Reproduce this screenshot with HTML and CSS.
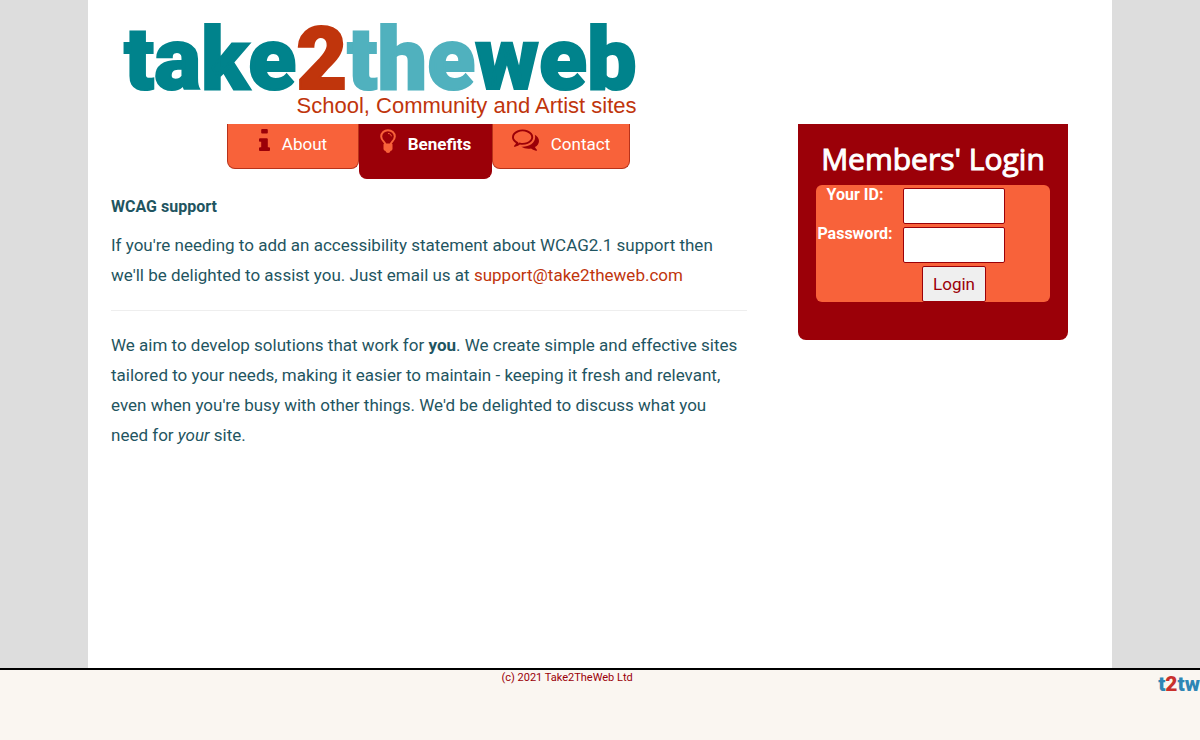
FILE: index.html
```html
<!DOCTYPE html>
<html lang="en">
<head>
  <meta charset="UTF-8">
  <meta name="viewport" content="width=device-width, initial-scale=1.0">
  <title>Take2TheWeb - Benefits</title>
  <link rel="stylesheet" href="styles.css">
</head>
<body>
  <div class="page">
    <header class="banner">
      <a href="#" class="logo">
        <span class="logo-name">take<span class="logo-two">2</span><span class="logo-the">the</span>web</span>
        <span class="logo-tag">School, Community and Artist sites</span>
      </a>
    </header>

    <div class="columns">
      <div class="main">
        <nav class="tabs" aria-label="Main menu">
          <a href="#" class="tab tab-about">
            <svg class="icon-info" viewBox="0 0 640 1536" preserveAspectRatio="none" aria-hidden="true"><path d="M640 1344v128q0 26-19 45t-45 19H64q-26 0-45-19t-19-45v-128q0-26 19-45t45-19h64V896H64q-26 0-45-19T0 832V704q0-26 19-45t45-19h384q26 0 45 19t19 45v576h64q26 0 45 19t19 45zM512 64v192q0 26-19 45t-45 19H192q-26 0-45-19t-19-45V64q0-26 19-45t45-19h256q26 0 45 19t19 45z"/></svg>
            About
          </a>
          <a href="#" class="tab tab-benefits" aria-current="page">
            <svg class="icon-bulb" viewBox="0 0 16 24" aria-hidden="true">
              <path class="bulb-line" d="M5.500 16C5.500 12.500 1.200 12 1.200 7.500A6.800 6.300 0 0 1 14.800 7.500C14.800 12 10.500 12.500 10.500 16"/>
              <path class="bulb-shine" d="M8 4.500c2 0 3.300 1 3.300 2.800"/>
              <path d="M4.500 14.500h7q1 0 1 1v4.500q0 1.500-2 2-.5 2-2.500 2t-2.500-2q-2-.5-2-2v-4.500q0-1 1-1z"/>
            </svg>
            Benefits
          </a>
          <a href="#" class="tab tab-contact">
            <svg class="icon-chat" viewBox="0 0 1792 1536" aria-hidden="true"><path d="M704 128q-153 0-286 52T206.500 321 128 512q0 82 53 158t149 132l97 56-35 84q34-20 62-39l44-31 53 10q78 14 153 14 153 0 286-52t211.500-141T1280 512t-78.500-191T990 180 704 128zm0-128q191 0 353.500 68.500t256.500 186.500 94 257-94 257-256.500 186.500T704 1024q-86 0-176-16-124 88-278 128-36 9-86 16h-3q-11 0-20.500-8t-11.500-21q-1-3-1-6.500t.5-6.500 2-6l2.500-5 3.500-5.500 4-5 4.500-5 4-4.500q5-6 23-25t26-29.500 22.500-29 25-38.500 20.500-44q-124-72-195-177T0 512q0-139 94-257T350.500 68.500 704 0zm822 1169q10 24 20.500 44t25 38.500 22.500 29 26 29.500 23 25q1 1 4 4.500t4.500 5 4 5 3.500 5.500l2.500 5 2 6 .5 6.500-1 6.500q-3 14-13 22t-22 7q-50-7-86-16-154-40-278-128-90 16-176 16-271 0-472-132 58 4 88 4 161 0 309-45t264-129q125-92 192-212t67-254q0-77-23-152 129 71 204 178t75 230q0 120-71 224.500T1526 1169z"/></svg>
            Contact
          </a>
        </nav>

        <main class="content">
          <h1>WCAG support</h1>
          <p>If you're needing to add an accessibility statement about WCAG2.1 support then we'll be delighted to assist you. Just email us at <a href="mailto:support@take2theweb.com">support@take2theweb.com</a></p>
          <hr>
          <p>We aim to develop solutions that work for <b>you</b>. We create simple and effective sites tailored to your needs, making it easier to maintain - keeping it fresh and relevant, even when you're busy with other things. We'd be delighted to discuss what you need for <i>your</i> site.</p>
        </main>
      </div>

      <aside class="login">
        <h2>Members' Login</h2>
        <form class="login-form">
          <label for="userid">Your ID:</label>
          <input type="text" id="userid">
          <label for="password">Password:</label>
          <input type="password" id="password">
          <button type="submit">Login</button>
        </form>
      </aside>
    </div>
  </div>

  <footer class="footer">
    <p>(c) 2021 Take2TheWeb Ltd</p>
    <a href="#" class="mini-logo">t<span>2</span>tw</a>
  </footer>
</body>
</html>
```
FILE: styles.css
```css
:root {
  --red: #9b0008;
  --orange: #f8623a;
  --rust: #c0350c;
  --teal: #00838c;
  --text: #1f5561;
}

* {
  box-sizing: border-box;
}

body {
  margin: 0;
  min-height: 100vh;
  display: flex;
  flex-direction: column;
  background: #ddd;
  color: var(--text);
  font-family: "Roboto", sans-serif;
  font-size: 17px;
  line-height: 30px;
}

a {
  color: var(--rust);
  text-decoration: none;
}

.page {
  flex: 1;
  width: 100%;
  max-width: 1024px;
  margin: 0 auto;
  background: #fff;
}

.banner {
  height: 124px;
  padding: 7px 0 0 36px;
}

.logo {
  display: inline-flex;
  flex-direction: column;
}

.logo-name {
  color: var(--teal);
  font-size: 88px;
  font-weight: 900;
  line-height: 104px;
  -webkit-text-stroke: 2px currentColor;
}

.logo-two {
  color: var(--rust);
}

.logo-the {
  color: #50b1be;
}

.logo-tag {
  align-self: flex-end;
  margin-top: -18px;
  font-family: "Liberation Sans", sans-serif;
  font-size: 22px;
  line-height: 26px;
}

.columns {
  display: flex;
  align-items: flex-start;
  justify-content: space-between;
  padding: 0 44px 0 23px;
}

.main {
  flex: 0 1 636px;
}

.tabs {
  display: flex;
  align-items: flex-start;
  height: 56px;
  padding-left: 116px;
}

.tab {
  display: flex;
  justify-content: center;
  gap: 12px;
  width: 132px;
  height: 45px;
  padding-top: 5px;
  background: var(--orange);
  border: 1px solid #b8321a;
  border-top: 0;
  border-radius: 0 0 8px 8px;
  color: #fff;
}

.tab svg {
  fill: var(--red);
}

.tab-benefits {
  width: 133px;
  height: 55px;
  background: var(--red);
  border-color: var(--red);
  font-weight: 700;
}

.tab-benefits svg {
  fill: var(--orange);
}

.tab-contact {
  width: 138px;
}

.icon-info {
  width: 11px;
  height: 22px;
}

.icon-bulb {
  width: 16px;
  height: 24px;
}

.icon-bulb .bulb-line,
.icon-bulb .bulb-shine {
  fill: none;
  stroke: var(--orange);
  stroke-width: 2;
}

.icon-bulb .bulb-shine {
  stroke-width: 1;
}

.icon-chat {
  width: 27px;
  height: 24px;
}

.content h1 {
  margin: 12px 0 8px;
  font-size: 16px;
  line-height: 30px;
}

.content p {
  margin: 0;
}

.content hr {
  margin: 20px 0 19px;
  border: 0;
  border-top: 1px solid #eee;
}

.login {
  width: 270px;
  padding: 15px 18px 38px;
  background: var(--red);
  border-radius: 0 0 8px 8px;
  color: #fff;
}

.login h2 {
  margin: 0;
  font-family: "Open Sans", sans-serif;
  font-size: 30px;
  font-weight: 400;
  line-height: 40px;
  text-align: center;
  white-space: nowrap;
  -webkit-text-stroke: 1px currentColor;
}

.login-form {
  display: grid;
  grid-template-columns: 78px 102px;
  column-gap: 9px;
  row-gap: 3px;
  padding-top: 3px;
  margin-top: 6px;
  background: var(--orange);
  border-radius: 6px;
}

.login-form label {
  font-size: 16px;
  font-weight: 700;
  line-height: 14px;
  text-align: center;
}

.login-form input,
.login-form button {
  height: 36px;
  border: 1px solid var(--red);
  border-radius: 2px;
  font: inherit;
}

.login-form input {
  width: 100%;
  background: #fff;
}

.login-form button {
  grid-column: 2;
  justify-self: center;
  padding: 0 10px;
  background: #efefef;
  color: var(--red);
}

.footer {
  display: flex;
  justify-content: space-between;
  height: 72px;
  background: #faf6f1;
  border-top: 2px solid #000;
}

.footer p {
  flex: 1;
  margin: 0;
  padding-right: 24px;
  color: var(--red);
  font-size: 11px;
  line-height: 16px;
  text-align: center;
}

.mini-logo {
  color: #2f86b5;
  font-size: 21px;
  font-weight: 900;
  line-height: 28px;
}

.mini-logo span {
  color: #c9302c;
}
```
